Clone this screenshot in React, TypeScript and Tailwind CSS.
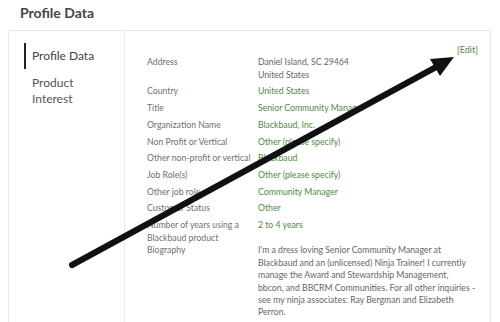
const rows: { label: string; value: string[]; green?: boolean }[] = [
  { label: "Address", value: ["Daniel Island, SC 29464", "United States"] },
  { label: "Country", value: ["United States"], green: true },
  { label: "Title", value: ["Senior Community Manager"], green: true },
  { label: "Organization Name", value: ["Blackbaud, Inc."], green: true },
  { label: "Non Profit or Vertical", value: ["Other (please specify)"], green: true },
  { label: "Other non-profit or vertical", value: ["Blackbaud"], green: true },
  { label: "Job Role(s)", value: ["Other (please specify)"], green: true },
  { label: "Other job role", value: ["Community Manager"], green: true },
  { label: "Customer Status", value: ["Other"], green: true },
];

const bio =
  "I'm a dress loving Senior Community Manager at Blackbaud and an (unlicensed) Ninja Trainer! I currently manage the Award and Stewardship Management, bbcon, and BBCRM Communities. For all other inquiries - see my ninja associates: Ray Bergman and Elizabeth Perron.";

function Arrow() {
  return (
    <svg
      className="absolute inset-0 pointer-events-none"
      width="500"
      height="322"
      viewBox="0 0 500 322"
    >
      <line
        x1="72"
        y1="265"
        x2="438"
        y2="66"
        stroke="#111"
        strokeWidth="6"
        strokeLinecap="round"
      />
      <polygon points="454,57 430,59 440,76" fill="#111" />
    </svg>
  );
}

export default function App() {
  return (
    <div className="relative w-[500px] h-[322px] overflow-hidden bg-white font-['Lato',sans-serif]">
      <h1 className="pl-[20px] pt-[3px] text-[14px] leading-[20px] font-bold text-[#444]">
        Profile Data
      </h1>

      <div className="ml-[8px] mr-[9px] mt-[7px] flex h-[400px] border border-[#e8e8e8]">
        {/* side nav */}
        <nav className="w-[116px] shrink-0 border-r border-[#ececec] pl-[15px] pt-[12px]">
          <div className="flex h-[26px] items-center border-l-[2px] border-[#222] pl-[6px] text-[12px] text-[#444]">
            Profile Data
          </div>
          <div className="mt-[6px] pl-[8px] text-[12px] leading-[16px] text-[#555]">
            Product
            <br />
            Interest
          </div>
        </nav>

        {/* details */}
        <div className="flex-1 pl-[22px] pr-[12px] pt-[13px] text-[8.7px] leading-[12.7px]">
          <div className="flex justify-end text-[9px] leading-[12px] text-[#4f8a44]">[Edit]</div>
          <div className="flex flex-col gap-[4px]">
            {rows.map((r) => (
              <div key={r.label} className="flex">
                <div className="w-[111px] shrink-0 text-[#707070]">{r.label}</div>
                <div className={r.green ? "text-[#4f8a44]" : "text-[#666]"}>
                  {r.value.map((v) => (
                    <div key={v}>{v}</div>
                  ))}
                </div>
              </div>
            ))}
            <div className="-mb-[4px] flex">
              <div className="w-[111px] shrink-0 text-[#707070]">
                Number of years using a Blackbaud product
              </div>
              <div className="text-[#4f8a44]">2 to 4 years</div>
            </div>
            <div className="flex">
              <div className="w-[111px] shrink-0 text-[#707070]">Biography</div>
              <p className="w-[218px] text-[#666] leading-[12.4px]">{bio}</p>
            </div>
          </div>
        </div>
      </div>

      <Arrow />
    </div>
  );
}
